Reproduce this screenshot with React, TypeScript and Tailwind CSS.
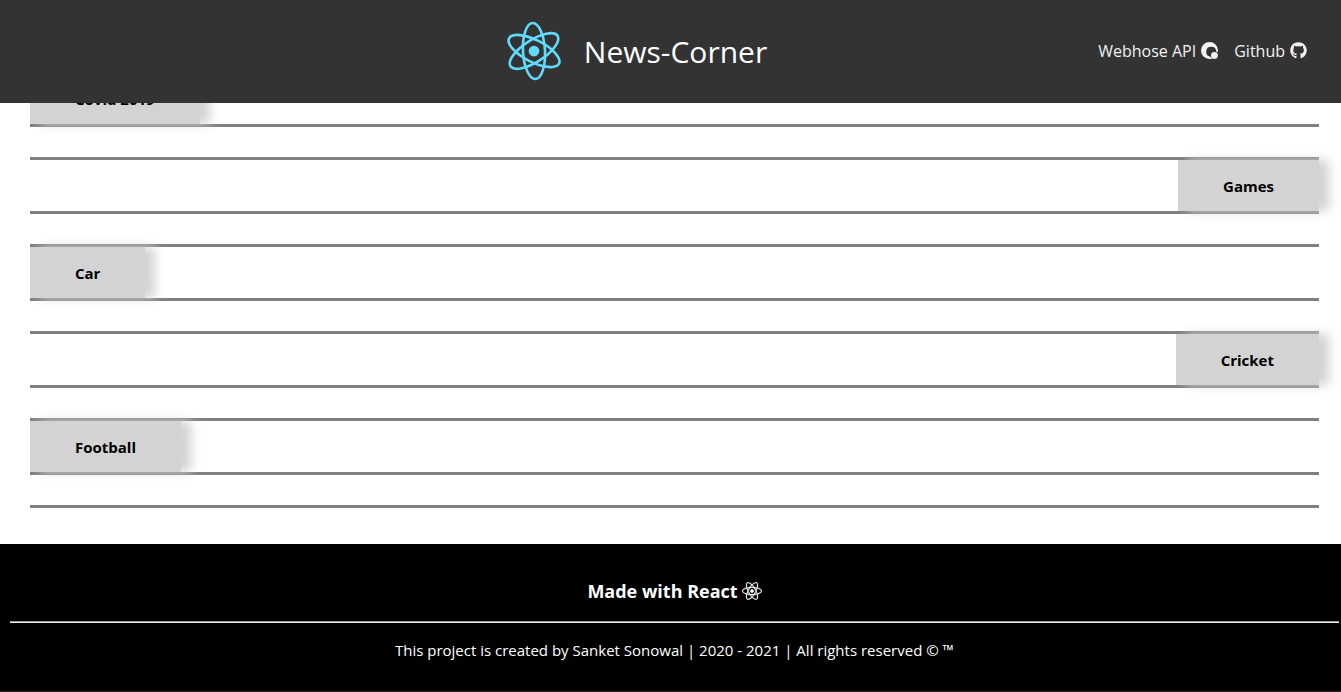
import { FaGithub, FaReact } from "react-icons/fa";

type Topic = { name: string; side: "left" | "right" };

const topics: Topic[] = [
  { name: "Covid 2019", side: "left" },
  { name: "Games", side: "right" },
  { name: "Car", side: "left" },
  { name: "Cricket", side: "right" },
  { name: "Football", side: "left" },
];

function Atom() {
  return (
    <svg viewBox="-12 -12 24 24" className="size-[60px]" aria-hidden="true">
      <circle r="2.15" fill="#61dafb" />
      <g fill="none" stroke="#61dafb" strokeWidth="1.05" transform="rotate(-3)">
        <ellipse rx="4.4" ry="11.2" />
        <ellipse rx="4.4" ry="11.2" transform="rotate(60)" />
        <ellipse rx="4.4" ry="11.2" transform="rotate(120)" />
      </g>
    </svg>
  );
}

function WebhoseIcon() {
  return (
    <svg viewBox="0 0 17 17" className="size-[17px]" aria-hidden="true">
      <path
        fill="currentColor"
        d="M8.5 0A8.5 8.5 0 0 0 8.5 17H12A4.4 4.4 0 0 1 9.3 14.7A5 5 0 1 1 15.2 9.6A4.4 4.4 0 0 1 17 10.4V8.5A8.5 8.5 0 0 0 8.5 0Z"
      />
      <circle cx="13.4" cy="13.4" r="3.4" fill="currentColor" />
    </svg>
  );
}

function TopicRow({ name, side }: Topic) {
  return (
    <section
      className={`flex border-y-[3px] border-[#808080] ${side === "right" ? "justify-end" : "justify-start"}`}
    >
      <button className="h-[51px] bg-[#d3d3d3] px-[45px] pt-[2px] text-[15px] font-bold text-black shadow-[10px_0_10px_#d3d3d3]">
        {name}
      </button>
    </section>
  );
}

export default function App() {
  return (
    <div className="overflow-x-hidden bg-white font-['Open_Sans','Noto_Sans',sans-serif]">
      <header className="fixed inset-x-0 top-0 z-10 grid h-[103px] grid-cols-[1fr_auto_1fr] items-center bg-[#333333] pr-[34px] pb-[2px] text-white">
        <div className="col-start-2 flex items-center gap-5 pr-9">
          <Atom />
          <h1 className="pt-[2px] text-[30px] leading-10">News-Corner</h1>
        </div>
        <nav className="flex justify-end gap-4 text-[16px] text-[#f2f2f2]">
          <a href="#webhose" className="flex items-center gap-[5px]">
            Webhose API <WebhoseIcon />
          </a>
          <a href="#github" className="flex items-center gap-[5px]">
            Github <FaGithub className="size-[17px]" />
          </a>
        </nav>
      </header>
      <main className="flex flex-col gap-[30px] pt-[70px] pr-[22px] pb-9 pl-[30px]">
        {topics.map((topic) => (
          <TopicRow key={topic.name} {...topic} />
        ))}
        <hr className="border-t-[3px] border-[#808080]" />
      </main>
      <footer className="border-b border-[#2b2426] bg-black pt-8 pr-[2px] pb-[29px] pl-[10px] text-center text-white">
        <h2 className="flex items-center justify-center gap-1 text-[18px] leading-[30px] font-bold">
          Made with React <FaReact className="size-5 stroke-white stroke-[6px]" />
        </h2>
        <hr className="mt-[15px] mb-[15px] border-t border-b border-t-[#9a9a9a] border-b-[#eeeeee]" />
        <p className="text-[15px] leading-6">
          This project is created by Sanket Sonowal | 2020 - 2021 | All rights reserved © ™
        </p>
      </footer>
    </div>
  );
}
